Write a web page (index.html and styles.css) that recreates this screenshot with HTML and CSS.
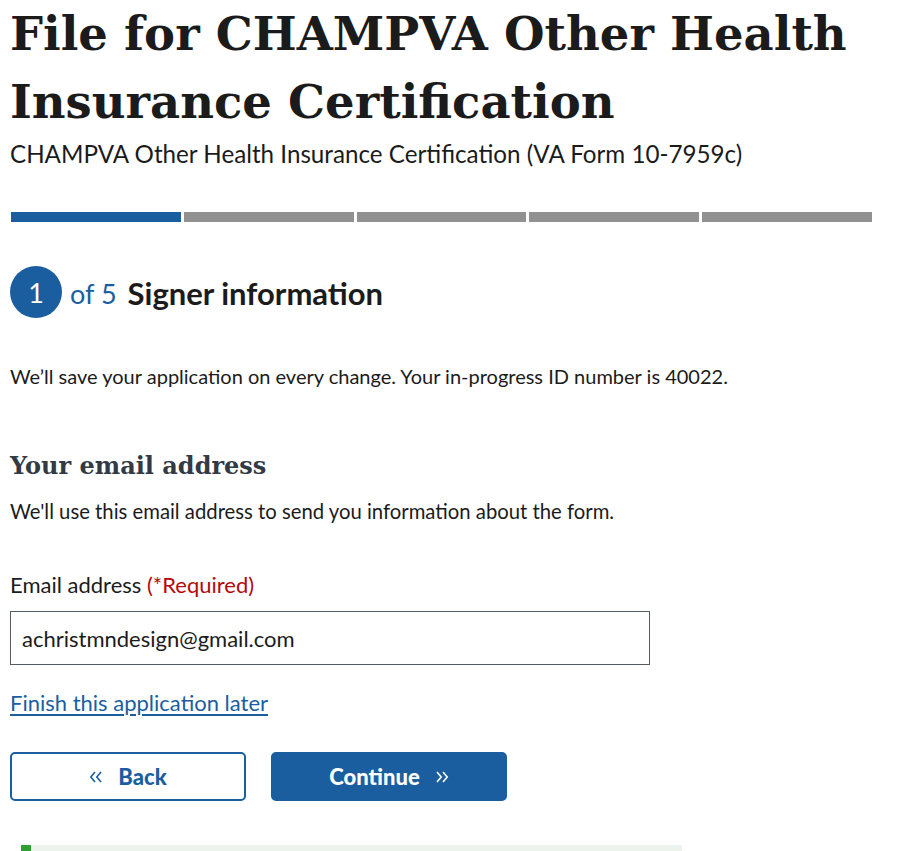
FILE: index.html
```html
<!DOCTYPE html>
<html lang="en">
<head>
<meta charset="utf-8">
<title>File for CHAMPVA Other Health Insurance Certification</title>
<link rel="stylesheet" href="styles.css">
</head>
<body>
<main class="page">
  <h1 class="title">File for CHAMPVA Other Health Insurance Certification</h1>
  <p class="subtitle">CHAMPVA Other Health Insurance Certification (VA Form 10-7959c)</p>

  <div class="segments">
    <span class="seg seg-active"></span>
    <span class="seg"></span>
    <span class="seg"></span>
    <span class="seg"></span>
    <span class="seg"></span>
  </div>

  <div class="step">
    <span class="step-num">1</span>
    <span class="step-of">of 5</span>
    <h2 class="step-name">Signer information</h2>
  </div>

  <p class="save-note">We’ll save your application on every change. Your in-progress ID number is 40022.</p>

  <h3 class="section-title">Your email address</h3>
  <p class="section-hint">We'll use this email address to send you information about the form.</p>

  <label class="field-label" for="email">Email address <span class="req">(*Required)</span></label>
  <input class="field-input" id="email" type="text" value="achristmndesign@gmail.com">

  <a class="later-link" href="#">Finish this application later</a>

  <div class="nav-buttons">
    <button class="btn btn-outline" type="button">
      <svg class="chev" viewBox="0 0 14 12" width="14" height="12" aria-hidden="true"><path d="M6 1 1.8 6 6 11M12 1 7.8 6 12 11" fill="none" stroke="currentColor" stroke-width="1.6"/></svg>
      <span>Back</span>
    </button>
    <button class="btn btn-primary" type="button">
      <span>Continue</span>
      <svg class="chev" viewBox="0 0 14 12" width="14" height="12" aria-hidden="true"><path d="M2 1 6.2 6 2 11M8 1 12.2 6 8 11" fill="none" stroke="currentColor" stroke-width="1.6"/></svg>
    </button>
  </div>

  <div class="bottom-bar"><span class="bottom-fill"></span></div>
</main>
</body>
</html>
```
FILE: styles.css
```css
html, body {
  margin: 0;
  padding: 0;
  background: #fff;
}
body {
  font-family: Lato, "Source Sans Pro", "Noto Sans", sans-serif;
  color: #1b1b1b;
}
.page {
  padding: 0 10px;
  width: 862px;
}
.title {
  font-family: "DejaVu Serif", serif;
  font-weight: bold;
  font-size: 46.5px;
  line-height: 68px;
  margin: 0;
  color: #1b1b1b;
}
.subtitle {
  font-size: 24.2px;
  line-height: 28px;
  margin: 4px 0 0;
}
.segments {
  display: flex;
  gap: 3px;
  margin: 44px 0 0 1px;
  height: 10px;
}
.seg {
  flex: 1;
  background: #919191;
}
.seg-active {
  background: #1b5e9f;
}
.step {
  display: flex;
  align-items: center;
  margin-top: 44px;
  height: 52px;
}
.step-num {
  width: 52px;
  height: 52px;
  border-radius: 50%;
  background: #1b5e9f;
  color: #fff;
  font-size: 27px;
  display: flex;
  align-items: center;
  justify-content: center;
}
.step-of {
  color: #1b5e9f;
  font-size: 27px;
  margin-left: 8px;
  padding-top: 2px;
}
.step-name {
  margin: 0 0 0 11px;
  font-size: 31px;
  font-weight: bold;
  padding-top: 2px;
}
.save-note {
  font-size: 20px;
  line-height: 30px;
  margin: 43px 0 0;
}
.section-title {
  font-family: "DejaVu Serif", serif;
  font-weight: bold;
  font-size: 24px;
  line-height: 31px;
  color: #323a45;
  margin: 59px 0 0;
}
.section-hint {
  font-size: 20.3px;
  line-height: 30px;
  margin: 15px 0 0;
}
.field-label {
  display: block;
  font-size: 22px;
  line-height: 30px;
  margin-top: 44px;
}
.req {
  color: #b50909;
}
.field-input {
  display: block;
  box-sizing: border-box;
  width: 640px;
  height: 54px;
  margin: 11px 0 0;
  padding: 0 11px;
  border: 1.5px solid #565c65;
  border-radius: 0;
  font-family: Lato, "Noto Sans", sans-serif;
  font-size: 22px;
  color: #1b1b1b;
  background: #fff;
}
.later-link {
  display: block;
  width: max-content;
  font-size: 22px;
  line-height: 30px;
  margin-top: 23px;
  color: #1b5e9f;
  text-decoration: underline;
  text-underline-offset: 3px;
}
.nav-buttons {
  display: flex;
  gap: 25px;
  margin-top: 34px;
}
.btn {
  box-sizing: border-box;
  width: 236px;
  height: 49px;
  border-radius: 5px;
  font-family: Lato, "Noto Sans", sans-serif;
  font-size: 22px;
  font-weight: 900;
  display: flex;
  align-items: center;
  justify-content: center;
  gap: 15px;
  cursor: pointer;
}
.btn-outline {
  background: #fff;
  border: 2px solid #1b5e9f;
  color: #1b5e9f;
}
.btn-primary {
  background: #1b5e9f;
  border: 2px solid #1b5e9f;
  color: #fff;
}
.chev {
  display: block;
}
.bottom-bar {
  margin: 44px 0 0 11px;
  width: 661px;
  height: 10px;
  background: #ecf3ec;
}
.bottom-fill {
  display: block;
  width: 10px;
  height: 100%;
  background: #2e9f31;
}
```
